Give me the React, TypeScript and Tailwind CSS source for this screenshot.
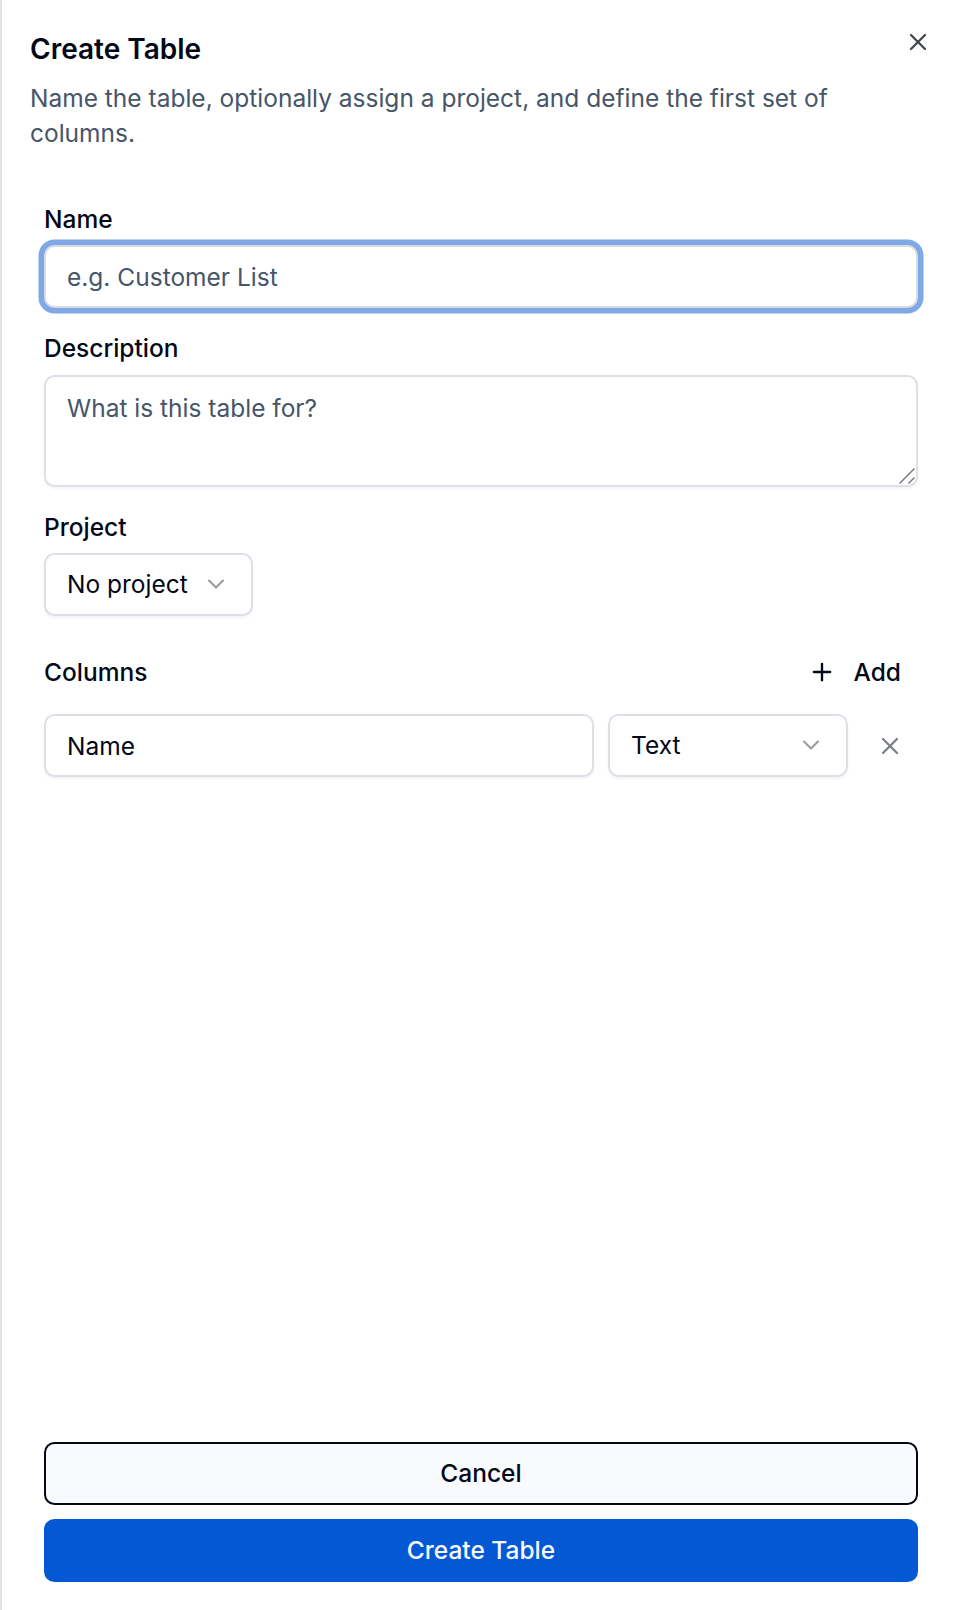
import { ChevronDown, Plus, X } from "lucide-react";

const inter = "font-['Inter','Noto_Sans',sans-serif]";

function Label({ children }: { children: string }) {
  return <label className="block h-[25px] text-[24.5px] leading-[25px] font-medium text-[#020817]">{children}</label>;
}

function Select({ value, className }: { value: string; className: string }) {
  return (
    <button
      type="button"
      className={`flex h-[63px] items-center justify-between rounded-[10.5px] border-2 border-[#dde1e7] bg-white pl-[21px] pr-[21px] pb-[1px] text-[24.5px] text-[#020817] shadow-[0_2px_3px_rgba(0,0,0,0.05)] ${className}`}
    >
      <span>{value}</span>
      <ChevronDown size={28} strokeWidth={1.8} className="text-[#020817] opacity-40" />
    </button>
  );
}

export default function App() {
  return (
    <div className={`relative flex h-[1610px] w-[960px] flex-col border-l-2 border-[#dfe3e9] bg-white ${inter}`}>
      <button type="button" className="absolute right-[28px] top-[28px] text-[#44474c]" aria-label="Close">
        <X size={28} strokeWidth={2} />
      </button>

      <header className="pl-[28px] pr-[120px] pt-[28px]">
        <h2 className="text-[28px] leading-[42px] font-semibold text-[#020817]">Create Table</h2>
        <p className="mt-[11px] text-[24.5px] leading-[35px] text-[#475569]">
          Name the table, optionally assign a project, and define the first set of columns.
        </p>
      </header>

      <form className="mt-[56px] flex flex-1 flex-col pl-[42px] pr-[41px]">
        <Label>Name</Label>
        <input
          placeholder="e.g. Customer List"
          className="mt-[13px] h-[63px] w-[874px] rounded-[10.5px] border-2 border-[#d9dcdf] bg-white px-[21px] text-[24.5px] text-[#020817] outline-none ring-[5.5px] ring-[#7fa8e6] placeholder:text-[#475569]"
        />

        <div className="mt-[28px]">
          <Label>Description</Label>
        </div>
        <div className="relative mt-[14px] h-[112px] w-[874px]">
          <textarea
            placeholder="What is this table for?"
            className="block h-full w-full resize-none rounded-[10.5px] border-2 border-[#dde1e7] bg-white px-[21px] py-[14px] text-[24.5px] leading-[35px] text-[#020817] shadow-[0_2px_3px_rgba(0,0,0,0.05)] outline-none placeholder:text-[#475569]"
          />
          <svg
            className="absolute bottom-[3px] right-[3px] text-[#777b80]"
            width="16"
            height="16"
            viewBox="0 0 16 16"
            fill="none"
            stroke="currentColor"
            strokeWidth="1.5"
            aria-hidden="true"
          >
            <path d="M0.5 15.5 15.5 0.5" />
            <path d="M9.5 15.5 15.5 9.5" />
          </svg>
        </div>

        <div className="mt-[28px]">
          <Label>Project</Label>
        </div>
        <Select value="No project" className="mt-[13px] w-[209px]" />

        <div className="mt-[40px] flex h-[32px] items-center justify-between pr-[18px]">
          <span className="text-[24.5px] font-medium text-[#020817]">Columns</span>
          <button type="button" className="flex items-center gap-[18px] text-[24.5px] font-medium text-[#020817]">
            <Plus size={28} strokeWidth={2} />
            Add
          </button>
        </div>

        <div className="mt-[26px] flex items-center">
          <input
            defaultValue="Name"
            className="h-[63px] w-[550px] rounded-[10.5px] border-2 border-[#dde1e7] bg-white px-[21px] text-[24.5px] text-[#020817] shadow-[0_2px_3px_rgba(0,0,0,0.05)] outline-none"
          />
          <Select value="Text" className="ml-[14px] w-[240px]" />
          <button type="button" className="ml-[28px] text-[#7c8087]" aria-label="Remove column">
            <X size={28} strokeWidth={2} />
          </button>
        </div>

        <div className="mt-auto flex flex-col gap-[14px] pb-[28px]">
          <button
            type="button"
            className="h-[63px] w-[874px] rounded-[10.5px] border-2 border-[#020817] bg-[#f8fafe] text-[24.5px] font-medium text-[#020817]"
          >
            Cancel
          </button>
          <button
            type="button"
            className="h-[63px] w-[874px] rounded-[10.5px] bg-[#0558d4] text-[24.5px] font-medium text-[#f8fafc]"
          >
            Create Table
          </button>
        </div>
      </form>
    </div>
  );
}
